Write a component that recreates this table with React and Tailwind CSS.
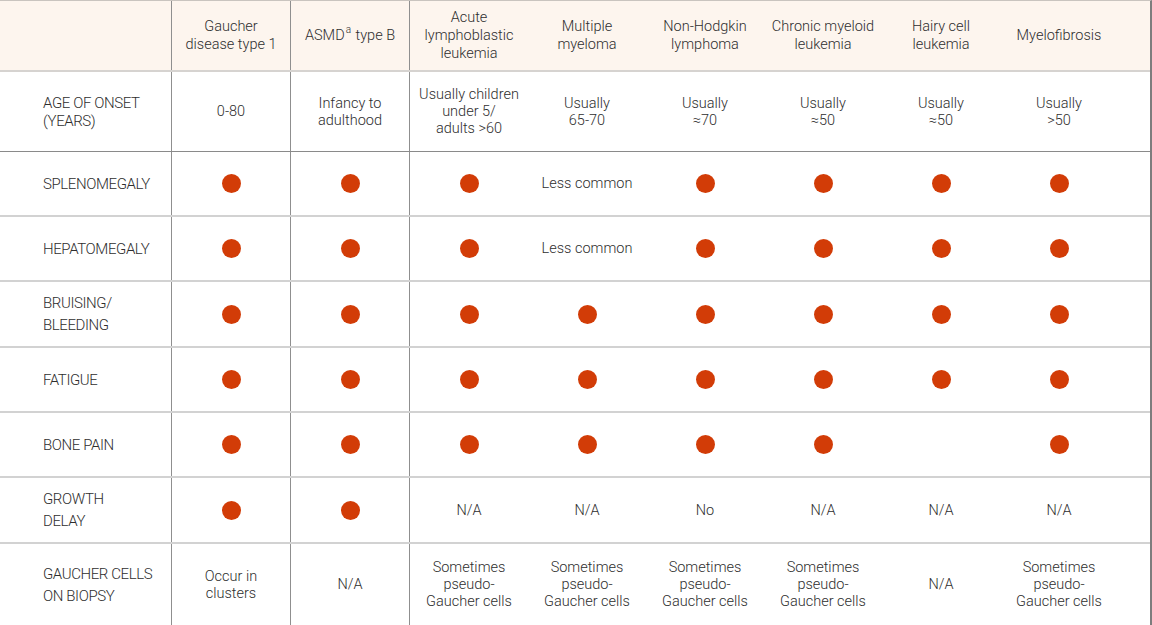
import React from 'react';

const Dot = () => <span className="inline-block h-[19px] w-[19px] rounded-full bg-[#d23c07]" />;

const D = 'dot';

const headers = [
  '',
  'Gaucher\ndisease type 1',
  'asmd',
  'Acute\nlymphoblastic\nleukemia',
  'Multiple\nmyeloma',
  'Non-Hodgkin\nlymphoma',
  'Chronic myeloid\nleukemia',
  'Hairy cell\nleukemia',
  'Myelofibrosis',
];

const rows = [
  {
    label: 'AGE OF ONSET\n(YEARS)',
    h: 'h-[80px]',
    lh: 'leading-[18px]',
    cells: ['0-80', 'Infancy to\nadulthood', 'Usually children\nunder 5/\nadults >60', 'Usually\n65-70', 'Usually\n≈70', 'Usually\n≈50', 'Usually\n≈50', 'Usually\n>50'],
  },
  { label: 'SPLENOMEGALY', h: 'h-[65px]', cells: [D, D, D, 'Less common', D, D, D, D] },
  { label: 'HEPATOMEGALY', h: 'h-[65px]', cells: [D, D, D, 'Less common', D, D, D, D] },
  { label: 'BRUISING/\nBLEEDING', h: 'h-[66px]', cells: [D, D, D, D, D, D, D, D] },
  { label: 'FATIGUE', h: 'h-[65px]', cells: [D, D, D, D, D, D, D, D] },
  { label: 'BONE PAIN', h: 'h-[65px]', cells: [D, D, D, D, D, D, '', D] },
  { label: 'GROWTH\nDELAY', h: 'h-[66px]', cells: [D, D, 'N/A', 'N/A', 'No', 'N/A', 'N/A', 'N/A'] },
  {
    label: 'GAUCHER CELLS\nON BIOPSY',
    h: 'h-[81px]',
    cells: ['Occur in\nclusters', 'N/A', 'Sometimes\npseudo-\nGaucher cells', 'Sometimes\npseudo-\nGaucher cells', 'Sometimes\npseudo-\nGaucher cells', 'Sometimes\npseudo-\nGaucher cells', 'N/A', 'Sometimes\npseudo-\nGaucher cells'],
  },
];

const widths = ['w-[119px]', 'w-[119px]', 'w-[118px]', 'w-[118px]', 'w-[118px]', 'w-[118px]', 'w-[118px]', 'w-[118px]'];

const Lines = ({ text }) =>
  text.split('\n').map((t, i) => (
    <span key={i} className="block">
      {t}
    </span>
  ));

const Cell = ({ value, i }) => (
  <div
    className={`${widths[i]} flex shrink-0 items-center justify-center text-center ${
      i < 2 ? 'border-r border-[#8f8f8f]' : ''
    }`}
  >
    {value === D ? <Dot /> : <div><Lines text={value} /></div>}
  </div>
);

export default function App() {
  return (
    <div className="w-[1152px] h-[625px] bg-white font-['Roboto',sans-serif] font-light text-[14.5px] leading-[17px] text-[#2e2e2e]">
      <div className="w-[1152px] border-t border-r-2 border-b border-t-[#c9c4bf] border-r-[#7d7d7d] border-b-[#7d7d7d]">
        {/* header */}
        <div className="flex h-[71px] bg-[#fdf5ee] border-b-2 border-[#d6d3d0]">
          <div className="w-[172px] shrink-0 border-r border-[#8f8f8f]" />
          {headers.slice(1).map((h, i) => (
            <div
              key={i}
              className={`${widths[i]} flex shrink-0 items-center justify-center text-center leading-[18px] ${
                i < 2 ? 'border-r border-[#8f8f8f]' : ''
              }`}
            >
              {h === 'asmd' ? (
                <span>
                  ASMD<sup className="text-[10px] -top-[7px] ml-[1px] mr-[1px]">a</sup> type B
                </span>
              ) : (
                <div><Lines text={h} /></div>
              )}
            </div>
          ))}
        </div>

        {rows.map((r, ri) => (
          <div
            key={ri}
            className={`flex ${r.h} ${
              ri === 0 ? 'border-b border-[#8a8a8a]' : ri < rows.length - 1 ? 'border-b-2 border-[#d2d2d2]' : ''
            }`}
          >
            <div
              className={`w-[172px] shrink-0 flex items-center pl-[43px] border-r border-[#8f8f8f] text-[15px] tracking-[-0.4px] ${
                r.lh || 'leading-[22px]'
              }`}
            >
              <div><Lines text={r.label} /></div>
            </div>
            {r.cells.map((c, i) => (
              <Cell key={i} value={c} i={i} />
            ))}
          </div>
        ))}
      </div>
    </div>
  );
}
